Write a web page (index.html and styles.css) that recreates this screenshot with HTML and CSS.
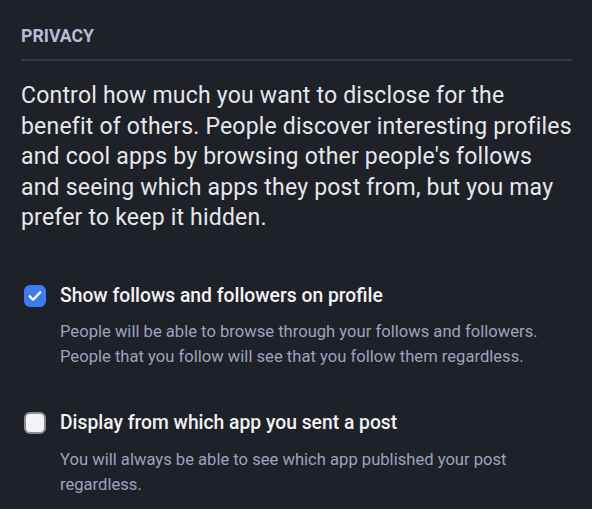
FILE: index.html
```html
<!DOCTYPE html>
<html>
<head>
<meta charset="utf-8">
<link rel="stylesheet" href="styles.css">
</head>
<body>
<section class="privacy">
  <h2 class="title">PRIVACY</h2>
  <hr class="divider">
  <p class="intro">Control how much you want to disclose for the benefit of others. People discover interesting profiles and cool apps by browsing other people's follows and seeing which apps they post from, but you may prefer to keep it hidden.</p>
  <div class="option">
    <div class="row">
      <span class="box checked">
        <svg viewBox="0 0 24 24" width="18" height="18"><path d="M5 12.5l4.5 4.5L19 7" fill="none" stroke="#fff" stroke-width="3.2" stroke-linecap="round" stroke-linejoin="round"/></svg>
      </span>
      <span class="label">Show follows and followers on profile</span>
    </div>
    <p class="desc">People will be able to browse through your follows and followers. People that you follow will see that you follow them regardless.</p>
  </div>
  <div class="option">
    <div class="row">
      <span class="box"></span>
      <span class="label">Display from which app you sent a post</span>
    </div>
    <p class="desc">You will always be able to see which app published your post regardless.</p>
  </div>
</section>
</body>
</html>
```

FILE: styles.css
```css
html, body {
  margin: 0;
  padding: 0;
  background: #1f2129;
}
body {
  font-family: Roboto, "Noto Sans", sans-serif;
  color: #e6e7ea;
}
.privacy {
  padding: 26px 20px 0 21px;
}
.title {
  margin: 0;
  font-size: 17.7px;
  font-weight: 700;
  line-height: 20px;
  color: #b5bcd4;
}
.divider {
  border: 0;
  height: 2px;
  background: #363943;
  margin: 13px 0 0 0;
}
.intro {
  margin: 20px -4px 0 0;
  font-size: 23px;
  line-height: 30.5px;
  letter-spacing: 0.2px;
  color: #e6e7ea;
}
.option {
  margin-top: 50px;
}
.option + .option {
  margin-top: 42px;
}
.row {
  display: flex;
  align-items: center;
  gap: 14px;
  padding-left: 3px;
}
.box {
  width: 22px;
  height: 22px;
  box-sizing: border-box;
  border-radius: 6px;
  background: #f4f4f6;
  border: 2px solid #8a8d96;
  display: flex;
  align-items: center;
  justify-content: center;
  flex: none;
}
.box.checked {
  background: #3c7cf0;
  border-color: #3c7cf0;
}
.label {
  font-size: 19.3px;
  font-weight: 500;
  color: #f2f2f4;
  line-height: 24px;
}
.desc {
  margin: 11.5px 0 0 39px;
  font-size: 16.6px;
  line-height: 25px;
  color: #9ca3bc;
}
```
